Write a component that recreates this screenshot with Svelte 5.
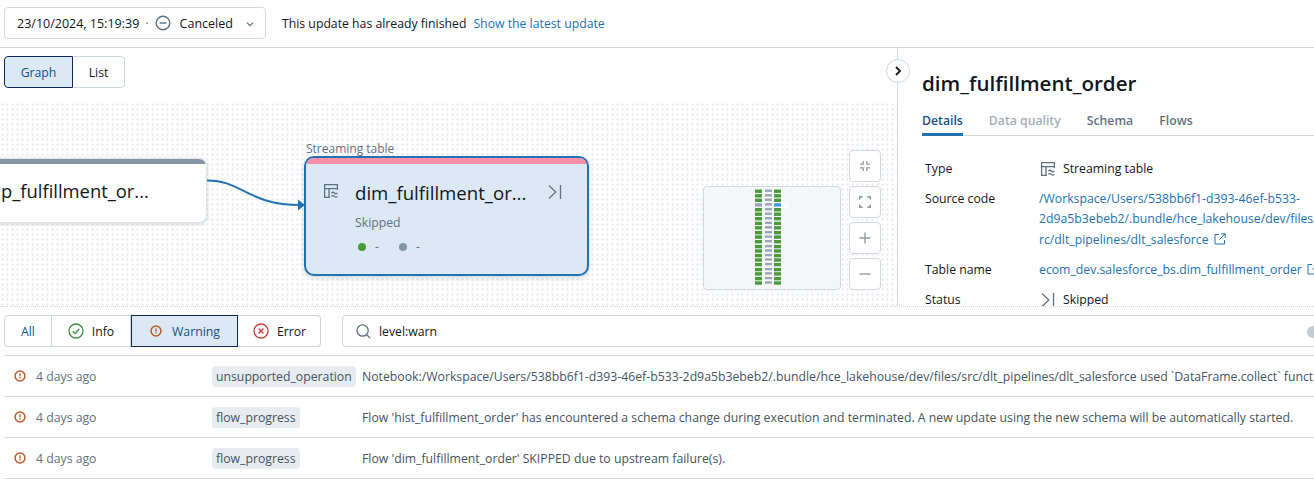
<script lang="ts">
	const logs = [
		{
			tag: 'unsupported_operation',
			message:
				'Notebook:/Workspace/Users/538bb6f1-d393-46ef-b533-2d9a5b3ebeb2/.bundle/hce_lakehouse/dev/files/src/dlt_pipelines/dlt_salesforce used `DataFrame.collect` function'
		},
		{
			tag: 'flow_progress',
			message:
				"Flow 'hist_fulfillment_order' has encountered a schema change during execution and terminated. A new update using the new schema will be automatically started."
		},
		{
			tag: 'flow_progress',
			message: "Flow 'dim_fulfillment_order' SKIPPED due to upstream failure(s)."
		}
	];

	const rowYs = [0, 4.6, 9.1, 13.7, 18.5, 23, 27.5, 32.2, 36.6, 41.5, 45.9, 50.5, 55.4, 59.8, 64.4, 68.8, 73.4, 78.4, 82.7, 87.4, 91.8];
</script>

{#snippet tableIcon(size: number)}
	<svg width={size} height={size} viewBox="0 0 16 16" fill="none" stroke="#5f7281" stroke-width="1.3">
		<path d="M7 14.4H1.6V1.6h12.8V7" />
		<path d="M1.6 5.6h12.8M6 5.6v8.8" />
		<path d="M8.4 10c1-1 2-1 3 0s2 1 3 0M8.4 13.4c1-1 2-1 3 0s2 1 3 0" />
	</svg>
{/snippet}

{#snippet skipIcon()}
	<svg width="16" height="16" viewBox="0 0 16 16" fill="none" stroke="#5f7281" stroke-width="1.3">
		<path d="M2 1.5 8.8 8 2 14.5M13.5 1v14" />
	</svg>
{/snippet}

{#snippet warnIcon(size: number)}
	<svg width={size} height={size} viewBox="0 0 16 16" fill="none">
		<circle cx="8" cy="8" r="6.6" stroke="#be5b2c" stroke-width="2" />
		<path d="M8 4.6v4M8 9.8v1.6" stroke="#be5b2c" stroke-width="1.8" />
	</svg>
{/snippet}

{#snippet externalIcon()}
	<svg class="ext" width="12" height="12" viewBox="0 0 12 12" fill="none" stroke="#2272b4" stroke-width="1">
		<path d="M5 1.5H1v9.5h9.5V7M7 .8h4.2V5M11 1 5.5 6.5" />
	</svg>
{/snippet}

<div class="page">
	<header class="topbar">
		<div class="update-select">
			<span>23/10/2024, 15:19:39</span>
			<span class="sep">·</span>
			<svg width="16" height="16" viewBox="0 0 16 16" fill="none" stroke="#5f7281" stroke-width="1.4">
				<circle cx="8" cy="8" r="6.8" />
				<path d="M4.6 8h6.8" />
			</svg>
			<span class="status">Canceled</span>
			<svg class="chev" width="10" height="10" viewBox="0 0 10 10" fill="none" stroke="#5f7281" stroke-width="1.3">
				<path d="M2 3.6 5 6.6l3-3" />
			</svg>
		</div>
		<span class="finished">This update has already finished</span>
		<span class="link">Show the latest update</span>
	</header>

	<div class="middle">
		<section class="graph">
			<div class="toggle">
				<button class="toggle-btn active">Graph</button>
				<button class="toggle-btn">List</button>
			</div>

			<div class="canvas">
				<div class="node node-prev">
					<div class="node-strip"></div>
					<div class="prev-name">p_fulfillment_or...</div>
				</div>

				<svg class="edge" width="110" height="40" viewBox="0 0 110 40" fill="none">
					<path d="M0 1.5C36 1.5 40 26 94 26" stroke="#2272b4" stroke-width="2" />
					<path d="M91 20.5 98 26l-7 5.5z" fill="#2272b4" />
				</svg>

				<div class="node-label">Streaming table</div>
				<div class="node node-current">
					<div class="node-strip pink"></div>
					<div class="node-body">
						<div class="node-head">
							<span class="node-icon">{@render tableIcon(16)}</span>
							<span class="node-name">dim_fulfillment_or...</span>
							<span class="node-skip">{@render skipIcon()}</span>
						</div>
						<div class="node-state">Skipped</div>
						<div class="node-metrics">
							<span class="dot green"></span><span class="metric">-</span>
							<span class="dot grey"></span><span class="metric">-</span>
						</div>
					</div>
				</div>

				<div class="minimap">
					<svg width="138" height="104" viewBox="0 0 138 104">
						{#each rowYs as y, i}
							{#if i === 3}
								<rect x="52" y={y + 3.5} width="7" height="3.4" fill="#98a8b6" />
								<rect x="71" y={y + 3.5} width="15" height="5" fill="#fcfdfe" />
								<rect x="71" y={y + 3.5} width="7" height="3.4" fill="#4299e0" />
							{:else}
								<rect x="52" y={y + 3.5} width="7" height="3.4" fill="#4c9a3c" />
								<rect x="71" y={y + 3.5} width="7" height="3.4" fill="#4c9a3c" />
							{/if}
							<rect x="62" y={y + 3.5} width="7" height="2.4" fill="#98a8b6" />
						{/each}
					</svg>
				</div>

				<div class="zoom-controls">
					<button class="zoom-btn" aria-label="Fit">
						<svg width="12" height="12" viewBox="0 0 12 12" fill="none" stroke="#8d9ba8" stroke-width="1.3">
							<path d="M4.2 1v3.2H1M7.8 1v3.2H11M4.2 11V7.8H1M7.8 11V7.8H11" />
						</svg>
					</button>
					<button class="zoom-btn" aria-label="Full screen">
						<svg width="12" height="12" viewBox="0 0 12 12" fill="none" stroke="#6f8090" stroke-width="1.3">
							<path d="M.8 3.6V.8h2.8M8.4.8h2.8v2.8M.8 8.4v2.8h2.8M8.4 11.2h2.8V8.4" />
						</svg>
					</button>
					<button class="zoom-btn" aria-label="Zoom in">
						<svg width="12" height="12" viewBox="0 0 12 12" fill="none" stroke="#8d9ba8" stroke-width="1.4">
							<path d="M6 .5v11M.5 6h11" />
						</svg>
					</button>
					<button class="zoom-btn" aria-label="Zoom out">
						<svg width="12" height="12" viewBox="0 0 12 12" fill="none" stroke="#8d9ba8" stroke-width="1.4">
							<path d="M.5 6h11" />
						</svg>
					</button>
				</div>
			</div>
		</section>

		<button class="collapse" aria-label="Collapse">
			<svg width="10" height="10" viewBox="0 0 10 10" fill="none" stroke="#11171c" stroke-width="1.8">
				<path d="M3 1 7 5 3 9" />
			</svg>
		</button>

		<aside class="panel">
			<h1>dim_fulfillment_order</h1>
			<nav class="tabs">
				<span class="tab selected">Details</span>
				<span class="tab disabled">Data quality</span>
				<span class="tab">Schema</span>
				<span class="tab">Flows</span>
			</nav>
			<dl class="details">
				<dt>Type</dt>
				<dd class="with-icon">{@render tableIcon(16)}<span>Streaming table</span></dd>
				<dt>Source code</dt>
				<dd class="link multi">
					<span>/Workspace/Users/538bb6f1-d393-46ef-b533-</span>
					<span>2d9a5b3ebeb2/.bundle/hce_lakehouse/dev/files/s</span>
					<span>rc/dlt_pipelines/dlt_salesforce {@render externalIcon()}</span>
				</dd>
				<dt>Table name</dt>
				<dd class="link">ecom_dev.salesforce_bs.dim_fulfillment_order {@render externalIcon()}</dd>
				<dt>Status</dt>
				<dd class="with-icon">{@render skipIcon()}<span>Skipped</span></dd>
			</dl>
		</aside>
	</div>

	<section class="logs">
		<div class="filters">
			<div class="levels">
				<button class="level all">All</button>
				<button class="level info">
					<svg width="16" height="16" viewBox="0 0 16 16" fill="none" stroke="#3f8f3a" stroke-width="1.3">
						<circle cx="8" cy="8" r="7" />
						<path d="M4.8 8.2 7.1 10.4 11.2 6" stroke-width="1.4" />
					</svg>
					Info
				</button>
				<button class="level warning">{@render warnIcon(12)} Warning</button>
				<button class="level error">
					<svg width="16" height="16" viewBox="0 0 16 16" fill="none" stroke="#c8403a" stroke-width="1.3">
						<circle cx="8" cy="8" r="7" />
						<path d="M5.6 5.6l4.8 4.8M10.4 5.6l-4.8 4.8" stroke-width="1.4" />
					</svg>
					Error
				</button>
			</div>
			<div class="search">
				<svg width="15" height="15" viewBox="0 0 16 16" fill="none" stroke="#5f7281" stroke-width="1.4">
					<circle cx="7" cy="7" r="6" />
					<path d="M11.4 11.4 15 15" />
				</svg>
				<span>level:warn</span>
				<span class="clear"></span>
			</div>
		</div>

		<div class="rows">
			{#each logs as log}
				<div class="row">
					<span class="row-icon">{@render warnIcon(12)}</span>
					<span class="time">4 days ago</span>
					<span class="tag-cell"><span class="tag">{log.tag}</span></span>
					<span class="message">{log.message}</span>
				</div>
			{/each}
		</div>
	</section>
</div>

<style>
	:global(body) {
		margin: 0;
		background: #fff;
	}

	.page {
		width: 1314px;
		height: 482px;
		overflow: hidden;
		display: flex;
		flex-direction: column;
		font-family: 'Open Sans', 'Noto Sans', sans-serif;
		font-size: 12.25px;
		color: #11171c;
	}

	button {
		font: inherit;
		color: inherit;
		background: #fff;
		cursor: pointer;
	}

	svg {
		display: block;
		flex: none;
	}

	.link {
		color: #2272b4;
	}

	.topbar {
		height: 47px;
		flex: none;
		display: flex;
		align-items: center;
		padding-left: 4px;
		border-bottom: 1px solid #d1d9e1;
		box-sizing: content-box;
	}

	.update-select {
		width: 248px;
		height: 30px;
		box-sizing: content-box;
		display: flex;
		align-items: center;
		padding-left: 12px;
		border: 1px solid #d1d9e1;
		border-radius: 4px;
		margin-right: 16px;
		margin-top: -1px;
		position: relative;
		font-size: 12.5px;
	}

	.sep {
		margin: 0 6px;
		color: #5f7281;
	}

	.status {
		margin-left: 9px;
	}

	.chev {
		position: absolute;
		right: 10px;
		top: 11px;
	}

	.finished {
		margin-right: 7px;
	}

	.middle {
		height: 258px;
		flex: none;
		display: flex;
		position: relative;
	}

	.graph {
		width: 897px;
		flex: none;
		position: relative;
		display: flex;
		flex-direction: column;
	}

	.toggle {
		display: flex;
		padding: 8px 0 0 4px;
		height: 33px;
		box-sizing: content-box;
		flex: none;
	}

	.toggle-btn {
		height: 32px;
		padding: 0;
		border: 1px solid #cbd5de;
		border-left: none;
		border-radius: 0 4px 4px 0;
		width: 52px;
	}

	.toggle-btn.active {
		width: 69px;
		border: 1px solid #0e2a52;
		border-radius: 4px 0 0 4px;
		background: #dce8f3;
		color: #0e538b;
	}

	.canvas {
		flex: 1;
		margin-top: 14px;
		position: relative;
		background-image: radial-gradient(circle, #eceef1 1px, transparent 1.3px);
		background-size: 5px 5px;
		background-position: 0 -1px;
	}

	.node {
		position: absolute;
		box-sizing: border-box;
		overflow: hidden;
	}

	.node-prev {
		left: -30px;
		top: 55px;
		width: 237px;
		height: 65px;
		background: #fff;
		border: 1px solid #dfe4e9;
		border-radius: 8px;
		box-shadow: 0 1px 4px rgba(30, 50, 70, 0.2);
	}

	.node-strip {
		height: 5px;
		background: #8496a6;
	}

	.node-strip.pink {
		height: 6px;
		background: #f78fa7;
	}

	.prev-name {
		padding: 15px 0 0 30px;
		font-size: 18.4px;
		line-height: 24px;
	}

	.edge {
		position: absolute;
		left: 207px;
		top: 76px;
		z-index: 1;
	}

	.node-label {
		position: absolute;
		left: 306px;
		top: 38px;
		color: #5f7281;
		font-size: 12px;
		line-height: 16px;
	}

	.node-current {
		left: 304px;
		top: 53px;
		width: 285px;
		height: 120px;
		background: #dce8f3;
		border: 2px solid #2272b4;
		border-radius: 10px;
		box-shadow: 0 2px 5px rgba(30, 50, 70, 0.2);
	}

	.node-body {
		padding: 14px 24px 0 17px;
	}

	.node-head {
		display: flex;
		align-items: center;
		height: 28px;
	}

	.node-icon {
		width: 32px;
		margin-top: -2px;
	}

	.node-name {
		flex: 1;
		font-size: 18.6px;
		white-space: nowrap;
	}

	.node-state {
		margin: 8px 0 0 32px;
		color: #5f7281;
		line-height: 18px;
	}

	.node-metrics {
		display: flex;
		align-items: center;
		margin: 7px 0 0 35px;
		color: #5f7281;
		font-size: 12px;
		line-height: 16px;
	}

	.dot {
		width: 8px;
		height: 8px;
		border-radius: 50%;
		margin-right: 9px;
	}

	.dot.green {
		background: #4c9a3c;
	}

	.dot.grey {
		background: #8496a6;
	}

	.metric {
		width: 24px;
	}

	.minimap {
		position: absolute;
		left: 703px;
		top: 83px;
		width: 138px;
		height: 104px;
		box-sizing: border-box;
		background: #f5f6f8;
		border: 1px solid #d1d9e1;
		border-radius: 4px;
		overflow: hidden;
	}

	.minimap svg {
		margin: -1px;
	}

	.zoom-controls {
		position: absolute;
		left: 849px;
		top: 47px;
		display: flex;
		flex-direction: column;
		gap: 4px;
	}

	.zoom-btn {
		width: 32px;
		height: 32px;
		padding: 0;
		display: flex;
		align-items: center;
		justify-content: center;
		border: 1px solid #d1d9e1;
		border-radius: 4px;
	}

	.panel {
		flex: 1;
		min-width: 0;
		border-left: 1px solid #d1d9e1;
		overflow: hidden;
		padding-left: 24px;
	}

	.collapse {
		position: absolute;
		left: 886px;
		top: 11px;
		width: 24px;
		height: 24px;
		padding: 0;
		border: 1px solid #cbd5de;
		border-radius: 50%;
		display: flex;
		align-items: center;
		justify-content: center;
		z-index: 2;
	}

	h1 {
		margin: 20px 0 0;
		font-size: 20.6px;
		line-height: 30px;
		font-weight: 600;
		white-space: nowrap;
	}

	.tabs {
		display: flex;
		gap: 26px;
		margin-top: 11px;
		height: 26px;
		box-sizing: content-box;
		border-bottom: 1px solid #d1d9e1;
		font-weight: 600;
		color: #5f7281;
		line-height: 24px;
	}

	.tab.selected {
		color: #0e538b;
		height: 24px;
		border-bottom: 3px solid #2272b4;
	}

	.tab.disabled {
		color: #a3aeb8;
	}

	.details {
		display: grid;
		grid-template-columns: 114px 1fr;
		margin: 23px 0 0 3px;
		row-gap: 10px;
		line-height: 20px;
	}

	dt,
	dd {
		margin: 0;
		white-space: nowrap;
	}

	.with-icon {
		display: flex;
		align-items: center;
		gap: 7px;
		padding-left: 1px;
	}

	.multi span {
		display: block;
		margin-bottom: 0.3px;
	}

	.ext {
		display: inline-block;
		vertical-align: -1px;
		margin-left: 2px;
	}

	.logs {
		flex: 1;
		border-top: 1px dotted #cbd5de;
		padding-left: 4px;
		min-height: 0;
	}

	.filters {
		display: flex;
		gap: 21px;
		margin-top: 8px;
		height: 32px;
	}

	.levels {
		display: flex;
	}

	.level {
		height: 32px;
		padding: 0;
		display: flex;
		align-items: center;
		justify-content: center;
		gap: 8px;
		border: 1px solid #cbd5de;
		border-left: none;
		box-sizing: border-box;
	}

	.level.all {
		width: 48px;
		border-left: 1px solid #cbd5de;
		border-radius: 4px 0 0 4px;
		color: #0e538b;
	}

	.level.info {
		width: 79px;
	}

	.level.warning {
		width: 107px;
		gap: 10px;
		padding-left: 1px;
		background: #dce8f3;
		border: 1px solid #0e2a52;
		color: #0e538b;
	}

	.level.error {
		width: 83px;
		padding-left: 1px;
		border-radius: 0 4px 4px 0;
	}

	.search {
		flex: 1;
		min-width: 0;
		position: relative;
		display: flex;
		align-items: center;
		gap: 8px;
		padding-left: 13px;
		border: 1px solid #cbd5de;
		border-radius: 4px;
		margin-right: -20px;
	}

	.clear {
		position: absolute;
		right: 14px;
		top: 10px;
		width: 12px;
		height: 12px;
		border-radius: 50%;
		background: #c4ccd4;
	}

	.rows {
		margin-top: 8px;
		border-top: 1px solid #d1d9e1;
	}

	.row {
		height: 40px;
		display: flex;
		align-items: center;
		border-bottom: 1px solid #d1d9e1;
		white-space: nowrap;
	}

	.row-icon {
		width: 32px;
		flex: none;
		padding-left: 10px;
		box-sizing: border-box;
	}

	.time {
		width: 176px;
		flex: none;
		color: #5f7281;
	}

	.tag-cell {
		width: 150px;
		flex: none;
	}

	.tag {
		background: #e8ecf0;
		border-radius: 4px;
		padding: 2px 4px;
		color: #445461;
	}

	.message {
		color: #445461;
	}
</style>
